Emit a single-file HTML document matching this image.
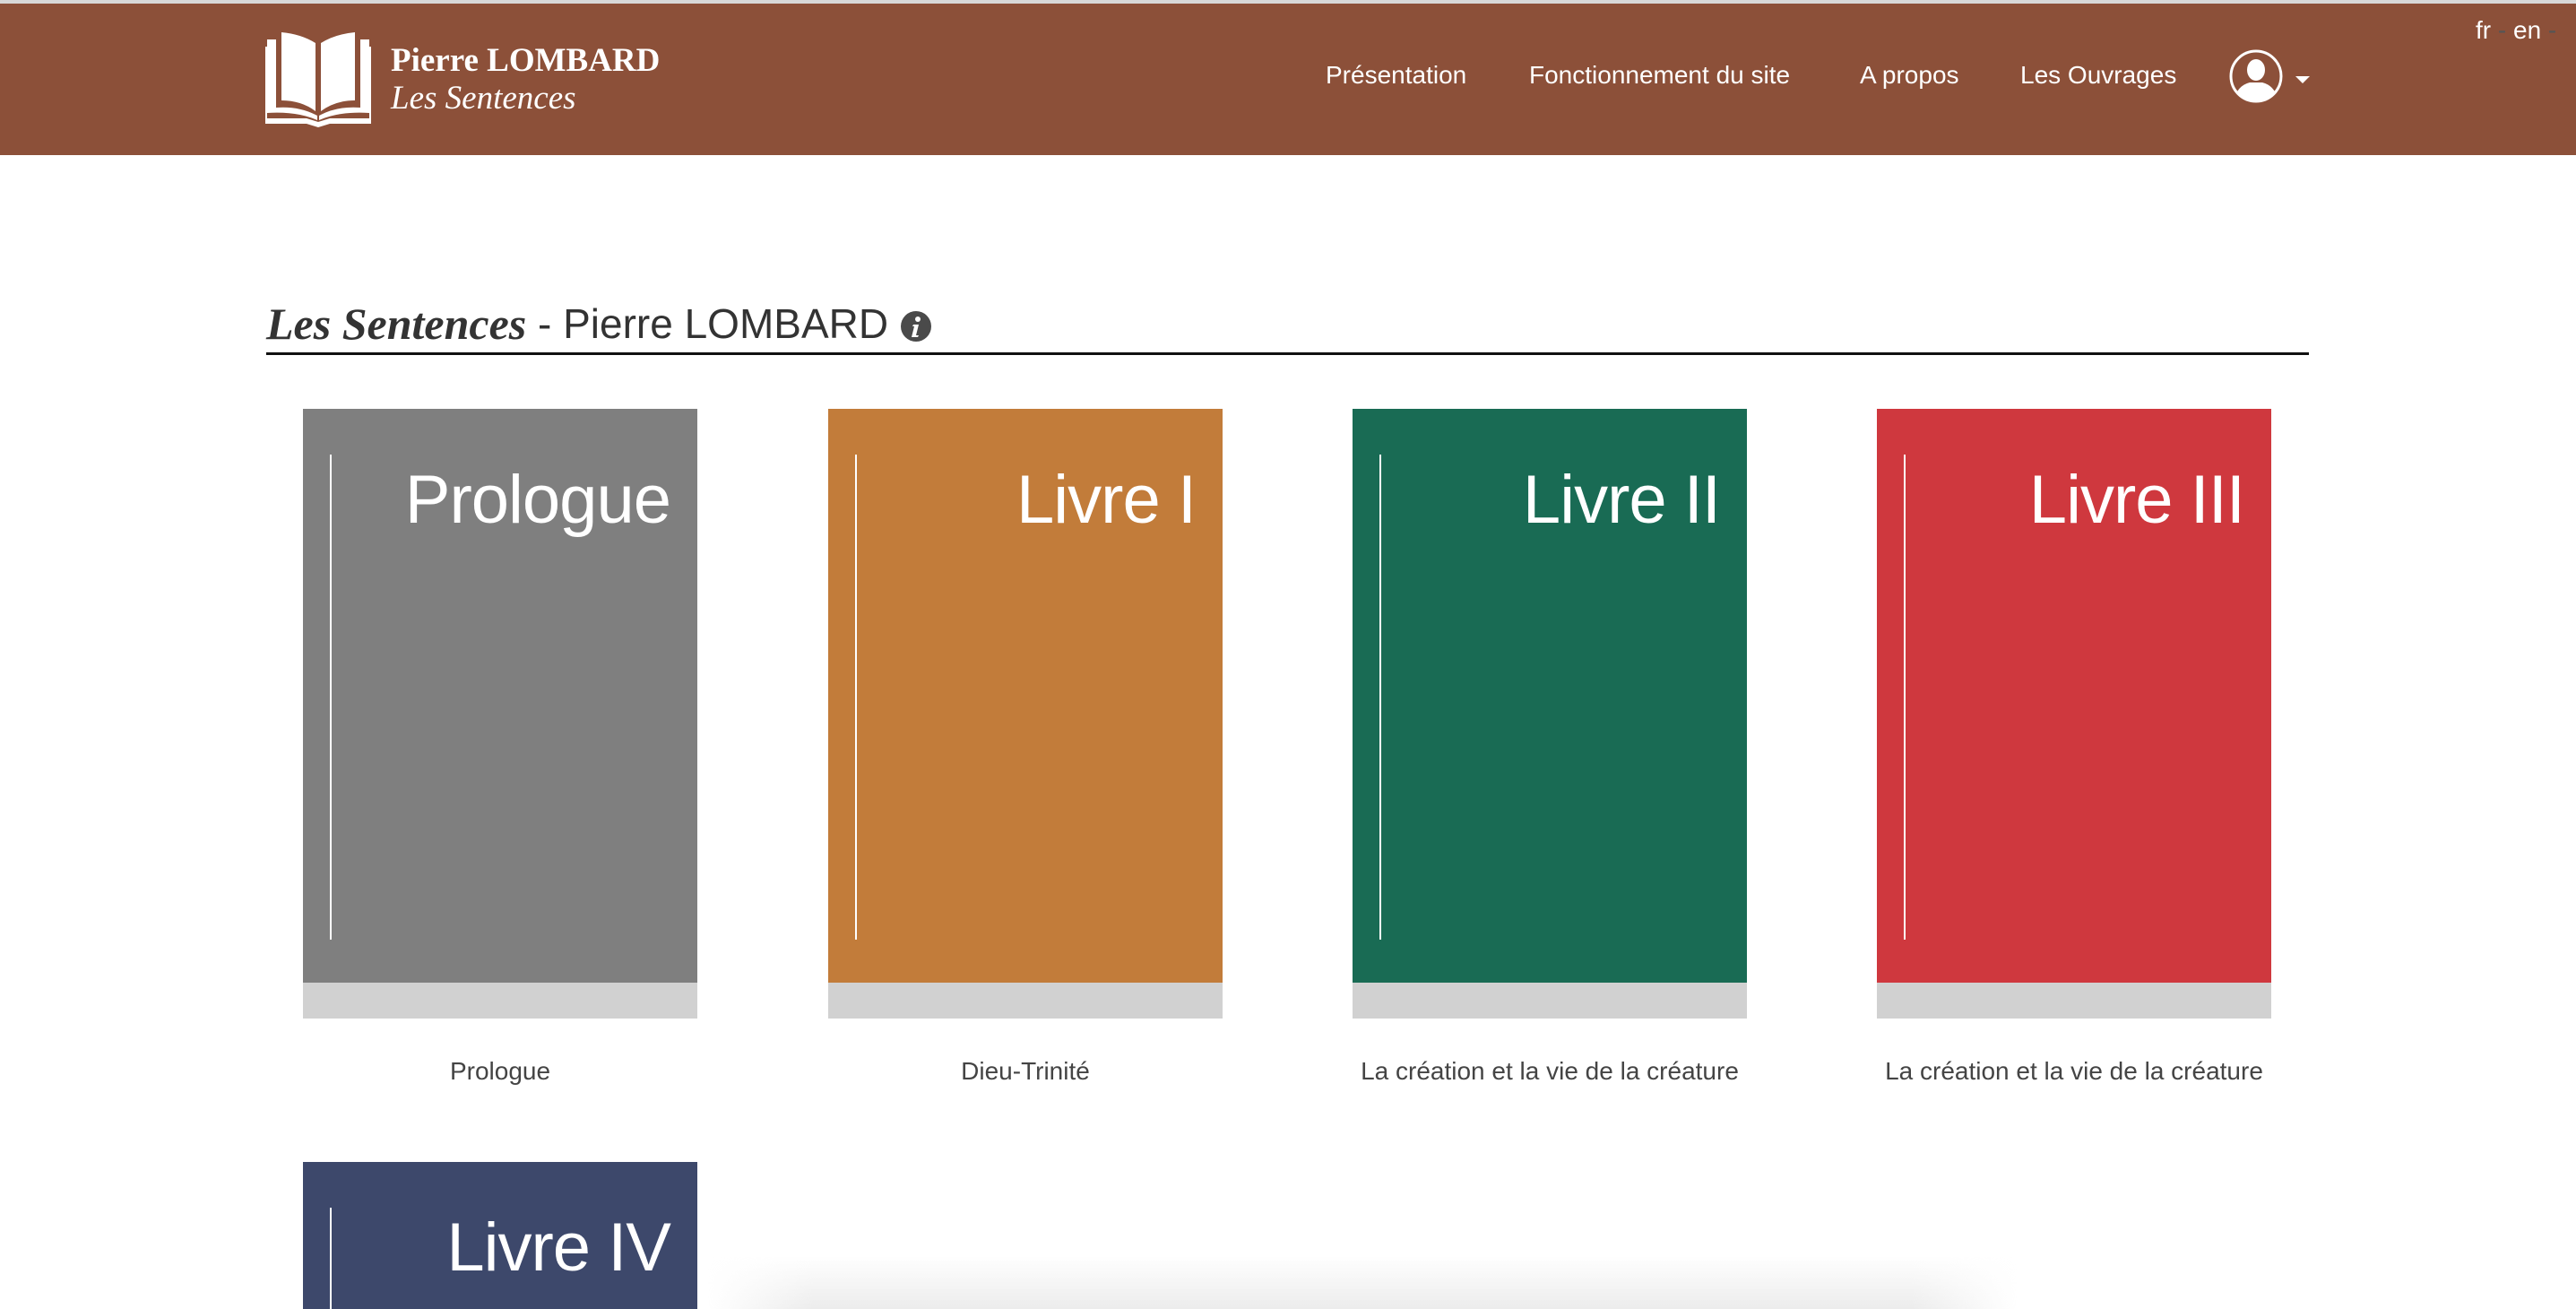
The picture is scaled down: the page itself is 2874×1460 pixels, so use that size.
<!DOCTYPE html>
<html style="width:2874px;height:1460px;overflow:hidden"><head><meta charset="utf-8"><style>
*{margin:0;padding:0;box-sizing:border-box}
body{width:2874px;height:1460px;overflow:hidden;background:#fff;font-family:"Liberation Sans",sans-serif;position:relative}
.top{position:absolute;left:0;top:0;width:2874px;height:4px;background:#d8d8d8}
.hdr{position:absolute;left:0;top:4px;width:2874px;height:169px;background:#8c5039}
.a{position:absolute;color:#fff;white-space:nowrap}
.nav{font-size:28px;top:68px}
.card{position:absolute;width:440px;height:680px;overflow:hidden}
.col{position:absolute;left:0;top:0;width:440px;height:640px}
.bar{position:absolute;left:0;top:640px;width:440px;height:40px;background:#d1d1d1}
.vl{position:absolute;left:30px;top:51px;width:2px;height:541px;background:#fff}
.t{position:absolute;right:30px;top:58px;font-size:76px;color:#fff;white-space:nowrap;letter-spacing:-1px}
.lbl{position:absolute;top:1179px;width:440px;text-align:center;font-size:28px;color:#444;white-space:nowrap}
</style></head><body>
<div class="top"></div>
<div class="hdr"></div>
<svg style="position:absolute;left:294px;top:32px" width="122" height="110" viewBox="0 0 122 110">
<g fill="#fff">
<path d="M20 4 Q42 6 58 16 L58 92 Q42 80 20 80 Z"/>
<path d="M102 4 Q80 6 64 16 L64 92 Q80 80 102 80 Z"/>
<path d="M10 12 L14 12 L14 88 Q40 86 60 97 L60 102 Q38 92 4 94 L4 12 Z" />
<path d="M112 12 L108 12 L108 88 Q82 86 62 97 L62 102 Q84 92 118 94 L118 12 Z"/>
<path d="M2 20 L2 106 L48 106 L61 110 L74 106 L120 106 L120 20 L118 20 L118 100 L74 100 L61 104 L48 100 L4 100 L4 20 Z"/>
</g></svg>
<div class="a" style="left:436px;top:46px;font-family:'Liberation Serif',serif;font-weight:bold;font-size:37px">Pierre LOMBARD</div>
<div class="a" style="left:436px;top:88px;font-family:'Liberation Serif',serif;font-style:italic;font-size:37px">Les Sentences</div>
<div class="a nav" style="left:1479px">Présentation</div>
<div class="a nav" style="left:1706px">Fonctionnement du site</div>
<div class="a nav" style="left:2075px">A propos</div>
<div class="a nav" style="left:2254px">Les Ouvrages</div>
<svg style="position:absolute;left:2486px;top:54px" width="62" height="62" viewBox="0 0 62 62">
<defs><clipPath id="c"><circle cx="31" cy="31" r="27"/></clipPath></defs>
<circle cx="31" cy="31" r="28" fill="none" stroke="#fff" stroke-width="3"/>
<g clip-path="url(#c)" fill="#fff"><ellipse cx="31" cy="24" rx="10" ry="12"/><path d="M6 62 Q8 42 24 38 L38 38 Q54 42 56 62 Z"/></g>
</svg>
<div style="position:absolute;left:2561px;top:85px;border-left:8px solid transparent;border-right:8px solid transparent;border-top:8px solid #fff"></div>
<div class="a" style="left:2762px;top:18px;font-size:28px">fr <span style="color:#555">-</span> en <span style="color:#555">-</span></div>

<div style="position:absolute;left:297px;top:332px;font-size:46px;color:#333;white-space:nowrap;display:flex;align-items:center"><span style="font-family:'Liberation Serif',serif;font-weight:bold;font-style:italic;font-size:50px">Les Sentences</span>&nbsp;- Pierre LOMBARD&nbsp;<svg width="36" height="36" viewBox="0 0 36 36" style="margin-top:6px"><circle cx="18" cy="18" r="17" fill="#4a4a4a"/><circle cx="20" cy="10" r="3" fill="#fff"/><path d="M15 16 L21 16 L18 28 L21 28 L20 30 L13 30 L16 18 L14 18 Z" fill="#fff"/></svg></div>
<div style="position:absolute;left:297px;top:393px;width:2279px;height:3px;background:#111"></div>

<div class="card" style="left:338px;top:456px"><div class="col" style="background:#7f7f7f"></div><div class="bar"></div><div class="vl"></div><div class="t">Prologue</div></div>
<div class="card" style="left:924px;top:456px"><div class="col" style="background:#c27c3a"></div><div class="bar"></div><div class="vl"></div><div class="t">Livre I</div></div>
<div class="card" style="left:1509px;top:456px"><div class="col" style="background:#196b54"></div><div class="bar"></div><div class="vl"></div><div class="t">Livre II</div></div>
<div class="card" style="left:2094px;top:456px"><div class="col" style="background:#cf383e"></div><div class="bar"></div><div class="vl"></div><div class="t">Livre III</div></div>
<div class="lbl" style="left:338px">Prologue</div>
<div class="lbl" style="left:924px">Dieu-Trinité</div>
<div class="lbl" style="left:1509px">La création et la vie de la créature</div>
<div class="lbl" style="left:2094px">La création et la vie de la créature</div>
<div style="position:absolute;left:338px;top:1296px;width:440px;height:164px;background:#3d486b"></div>
<div style="position:absolute;left:368px;top:1347px;width:2px;height:113px;background:#fff"></div>
<div style="position:absolute;left:338px;top:1354px;width:410px;text-align:right;font-size:76px;line-height:1;color:#fff;white-space:nowrap;letter-spacing:-1px">Livre IV</div>
<div style="position:absolute;left:790px;top:1400px;width:1460px;height:60px;background:linear-gradient(#fff0,#ececec);-webkit-mask-image:linear-gradient(90deg,transparent,#000 8%,#000 92%,transparent)"></div>
</body></html>
